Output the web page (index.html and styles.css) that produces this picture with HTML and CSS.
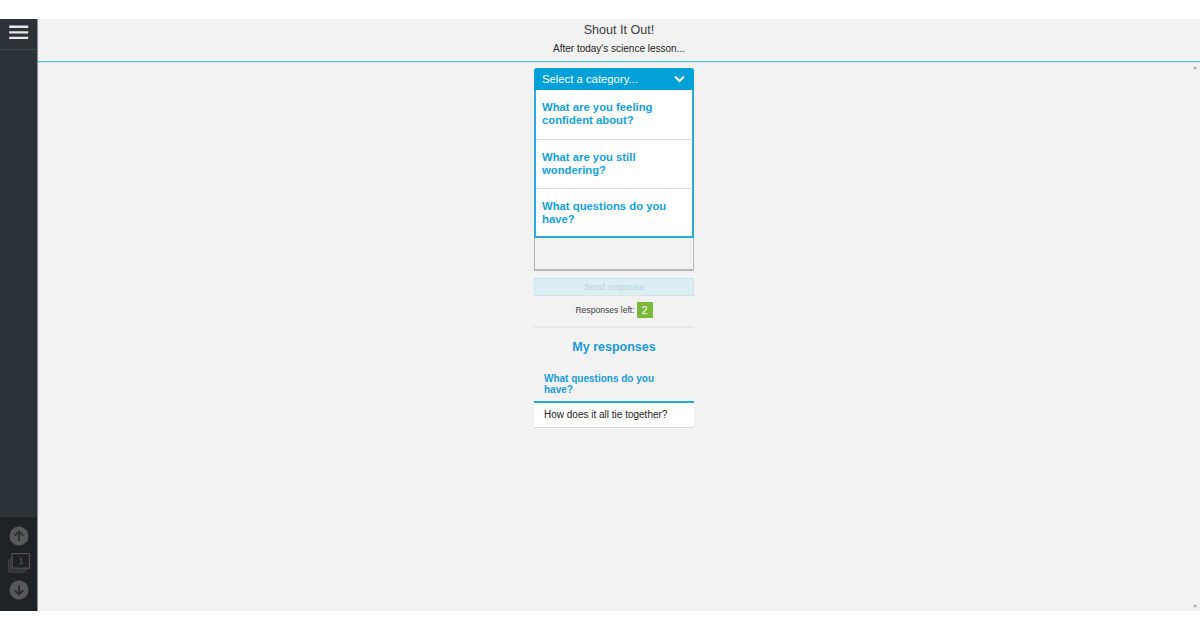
FILE: index.html
```html
<!DOCTYPE html>
<html lang="en">
<head>
<meta charset="utf-8">
<title>Shout It Out!</title>
<link rel="stylesheet" href="styles.css">
</head>
<body>
<div class="app">
  <aside class="sidebar">
    <div class="menu">
      <svg width="20" height="14" viewBox="0 0 20 14"><path d="M0 1.7h19M0 7.4h19M0 12.9h19" stroke="#e8e8e8" stroke-width="2.4" fill="none" transform="translate(.2 0)"/></svg>
    </div>
    <div class="pager">
      <svg width="20" height="20" viewBox="0 0 20 20"><circle cx="10" cy="10" r="9.5" fill="#575859"/><path d="M10 15V5.5M5.8 9.6 10 5.4l4.2 4.2" stroke="#2a2c2e" stroke-width="1.8" fill="none"/></svg>
      <div class="pages">
        <svg class="stack" width="22" height="20" viewBox="0 0 22 20"><path d="M.7 6v13h16.6" stroke="#4a4b4c" stroke-width="1" fill="none"/><path d="M2.7 4v13h16.6" stroke="#4a4b4c" stroke-width="1" fill="none"/><rect x="4.1" y=".6" width="17.3" height="14.6" fill="#1f2326" stroke="#4f5051" stroke-width="1.2"/></svg>
        <span class="page-num">1</span>
      </div>
      <svg width="20" height="20" viewBox="0 0 20 20"><circle cx="10" cy="10" r="9.5" fill="#575859"/><path d="M10 5v9.5M5.8 10.4 10 14.6l4.2-4.2" stroke="#2a2c2e" stroke-width="1.8" fill="none"/></svg>
    </div>
  </aside>
  <main class="main">
    <header class="header">
      <h1 class="title">Shout It Out!</h1>
      <p class="subtitle">After today's science lesson...</p>
    </header>
    <section class="content">
      <div class="column">
        <div class="dropdown">
          <div class="dropdown-head">
            <span class="dropdown-label">Select a category...</span>
            <svg width="11" height="8" viewBox="0 0 11 8"><path d="M1 1.5 5.5 6 10 1.5" stroke="#fff" stroke-width="2" fill="none"/></svg>
          </div>
          <ul class="options">
            <li class="option">What are you feeling confident about?</li>
            <li class="option">What are you still wondering?</li>
            <li class="option">What questions do you have?</li>
          </ul>
        </div>
        <div class="answer"></div>
        <div class="send">Send response</div>
        <div class="left"><span class="left-label">Responses left:</span><span class="badge">2</span></div>
        <h2 class="mine">My responses</h2>
        <h3 class="mine-cat">What questions do you have?</h3>
        <div class="mine-text">How does it all tie together?</div>
      </div>
      <span class="arrow up"></span>
      <span class="arrow down"></span>
    </section>
  </main>
</div>
</body>
</html>
```
FILE: styles.css
```css
* { box-sizing: border-box; }
html, body { margin: 0; height: 100%; background: #fff; }
body { padding-top: 19px; font-family: "Liberation Sans", Arial, sans-serif; overflow: hidden; }
.app { display: flex; height: 592px; background: #f2f2f2; }
.sidebar { width: 38px; flex: none; display: flex; flex-direction: column; justify-content: space-between; background: #2d3236; border-right: 1px solid #8c8f91; }
.menu { height: 31px; padding: 6px 0 0 9px; border-bottom: 1px solid #3d4246; }
.menu svg { display: block; }
.pager { height: 94px; padding: 9px 0 0 9px; background: #1f2326; display: flex; flex-direction: column; }
.pager > svg { display: block; }
.pages { position: relative; width: 22px; height: 20px; margin: 7px 0 7px -1px; }
.stack { display: block; }
.page-num { position: absolute; left: 4px; top: 1px; width: 18px; text-align: center; font-size: 8.5px; line-height: 14px; color: #5a5b5c; }
.main { flex: 1; min-width: 0; display: flex; flex-direction: column; }
.header { height: 43px; flex: none; text-align: center; border-bottom: 1px solid #45c4d4; box-shadow: 0 1px 0 #c8edf1; padding-top: 3px; }
.title { margin: 0; font-size: 12.6px; line-height: 16px; font-weight: 400; color: #3c3c3c; }
.subtitle { margin: 4px 0 0; font-size: 10px; line-height: 14px; color: #222; }
.content { flex: 1; position: relative; padding: 6px 10px 0 0; }
.column { width: 160px; margin: 0 auto; }
.dropdown { border-radius: 3px 3px 0 0; }
.dropdown-head { height: 22px; padding: 0 9px 0 8px; background: #00a1d8; border-radius: 3px 3px 0 0; display: flex; align-items: center; justify-content: space-between; color: #fff; font-size: 11.3px; }
.dropdown-label { padding-bottom: 1px; }
.options { list-style: none; margin: 0; padding: 0; background: #fff; border: solid #2eaade; border-width: 0 2px 2px; height: 148px; }
.option { height: 49.5px; padding: 11px 6px 0 6px; border-bottom: 1px solid #d8d8d8; color: #149fdc; font-size: 11.3px; line-height: 13px; font-weight: 700; }
.option:last-child { border-bottom: 0; height: 48px; }
.answer { height: 33px; border: solid #b9b9b9; border-width: 0 1px 2px; background: #f1f1f1; }
.send { height: 18px; margin-top: 7px; border: 1px solid #cfe3ea; background: #daeef3; color: #bcd2da; font-size: 8.9px; line-height: 16px; text-align: center; }
.left { height: 32px; display: flex; align-items: flex-start; justify-content: center; gap: 2px; padding-top: 6px; border-bottom: 2px solid #e6e6e6; font-size: 8.6px; color: #3f3f3f; }
.left-label { line-height: 16px; }
.badge { width: 16px; height: 16px; background: #7ab93a; color: #fff; text-align: center; line-height: 16px; font-size: 10.5px; }
.mine { margin: 11px 0 0; font-size: 12.5px; line-height: 16px; font-weight: 700; color: #1a9bdc; text-align: center; }
.mine-cat { margin: 18px 0 0; padding: 0 30px 6px 10px; border-bottom: 2px solid #22a7e3; font-size: 10px; line-height: 11px; font-weight: 700; color: #1a9bdc; }
.mine-text { height: 25px; padding-left: 10px; background: #fff; border-bottom: 1px solid #d8d8d8; font-size: 10px; line-height: 23px; color: #222; }
.arrow { position: absolute; right: 3px; width: 0; height: 0; border-left: 2.5px solid transparent; border-right: 2.5px solid transparent; }
.arrow.up { top: 4px; border-bottom: 3px solid #a5a5a5; }
.arrow.down { bottom: 3px; border-top: 3px solid #a5a5a5; }
```
